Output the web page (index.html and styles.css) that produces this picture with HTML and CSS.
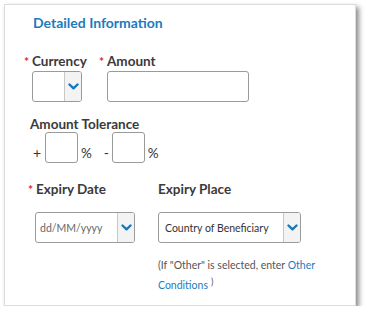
FILE: index.html
```html
<!DOCTYPE html>
<html>
<head>
<meta charset="utf-8">
<link rel="stylesheet" href="styles.css">
</head>
<body>
<div class="card">
  <h2 class="title">Detailed Information</h2>

  <div class="row row-top">
    <div class="field f-currency">
      <label class="lbl"><span class="req">*</span>Currency</label>
      <div class="select sel-currency">
        <span class="sel-value"></span>
        <span class="sel-btn"><svg width="11" height="7" viewBox="0 0 11 7"><path d="M1.5 1.5 L5.5 5.3 L9.5 1.5" fill="none" stroke="#1a77b8" stroke-width="2.4" stroke-linecap="round" stroke-linejoin="round"/></svg></span>
      </div>
    </div>
    <div class="field f-amount">
      <label class="lbl"><span class="req">*</span>Amount</label>
      <div class="input inp-amount"></div>
    </div>
  </div>

  <div class="tolerance">
    <div class="lbl lbl-tol">Amount Tolerance</div>
    <div class="tol-row">
      <span class="sign plus">+</span>
      <div class="input inp-small"></div>
      <span class="pct">%</span>
      <span class="sign minus">-</span>
      <div class="input inp-small"></div>
      <span class="pct">%</span>
    </div>
  </div>

  <div class="row row-expiry">
    <div class="field f-date">
      <label class="lbl"><span class="req">*</span>Expiry Date</label>
      <div class="select sel-date">
        <span class="sel-value placeholder">dd/MM/yyyy</span>
        <span class="sel-btn"><svg width="11" height="7" viewBox="0 0 11 7"><path d="M1.5 1.5 L5.5 5.3 L9.5 1.5" fill="none" stroke="#1a77b8" stroke-width="2.4" stroke-linecap="round" stroke-linejoin="round"/></svg></span>
      </div>
    </div>
    <div class="field f-place">
      <label class="lbl">Expiry Place</label>
      <div class="select sel-place">
        <span class="sel-value">Country of Beneficiary</span>
        <span class="sel-btn"><svg width="11" height="7" viewBox="0 0 11 7"><path d="M1.5 1.5 L5.5 5.3 L9.5 1.5" fill="none" stroke="#1a77b8" stroke-width="2.4" stroke-linecap="round" stroke-linejoin="round"/></svg></span>
      </div>
      <p class="hint">(If "Other" is selected, enter <a class="link">Other</a><br><a class="link">Conditions</a><span class="paren">)</span></p>
    </div>
  </div>
</div>
</body>
</html>
```
FILE: styles.css
```css
* { box-sizing: border-box; }
html, body { margin: 0; padding: 0; background: #fff; }
body { font-family: Lato, "Open Sans", sans-serif; color: #333; }

.card {
  margin: 4px 0 0 4px;
  width: 352px;
  height: 302px;
  border: 1px solid #dcdcdc;
  background: #fff;
  box-shadow: 3px 3px 5px rgba(0,0,0,0.45);
  padding: 7px 0 0 27px;
}

.title {
  margin: 0 0 0 1px;
  font-size: 14px;
  line-height: 22px;
  font-weight: 700;
  color: #1b7bbd;
}

.row { display: flex; }
.row-top { margin-top: 19px; }
.field { display: flex; flex-direction: column; }

.lbl {
  font-size: 13.5px;
  line-height: 17px;
  font-weight: 700;
  color: #3a3a3a;
  display: block;
}
.req {
  color: #e0262b;
  font-size: 12px;
  display: inline-block;
  width: 8px;
  margin-left: -8px;
}

.f-currency { width: 75px; }
.select, .input {
  border: 1px solid #9a9a9a;
  border-radius: 3px;
  height: 31px;
  background: #fff;
}
.select { display: flex; overflow: hidden; }
.sel-value { flex: 1; display: flex; align-items: center; font-size: 10.5px; color: #333; padding-left: 7px; }
.sel-btn {
  width: 17px;
  background: #f3f3f3;
  border-left: 1px solid #c8c8c8;
  display: flex; align-items: center; justify-content: center;
}
.sel-currency { width: 50px; margin-top: 1px; }
.inp-amount { width: 142px; margin-top: 1px; }

.tolerance { margin-top: 14px; margin-left: -2px; }
.tol-row { display: flex; align-items: flex-end; margin-top: -1px; }
.sign { font-size: 14px; color: #333; line-height: 16px; margin-bottom: 2px; }
.plus { margin-left: 3px; width: 11px; }
.minus { margin-left: 12px; width: 7px; }
.inp-small { width: 33px; height: 31px; margin-left: 1px; }
.pct { font-size: 13.5px; color: #333; line-height: 16px; margin: 0 0 2px 3px; }

.row-expiry { margin-top: 18px; }
.f-date { width: 123px; margin-left: 3px; }
.f-date .lbl { margin-left: 1px; }
.sel-date { width: 100px; margin-top: 14px; }
.placeholder { color: #666; font-size: 10.5px; padding-left: 4px; }
.f-place { width: 180px; }
.sel-place { width: 143px; margin-top: 14px; }
.sel-place .sel-value { padding-left: 6px; }

.hint {
  margin: 12px 0 0 0;
  font-size: 10.5px;
  line-height: 20px;
  color: #555;
  width: 170px;
}
.link { color: #1b7bbd; }
.paren { font-size: 9px; margin-left: 3px; vertical-align: 4px; line-height: 10px; }
```
